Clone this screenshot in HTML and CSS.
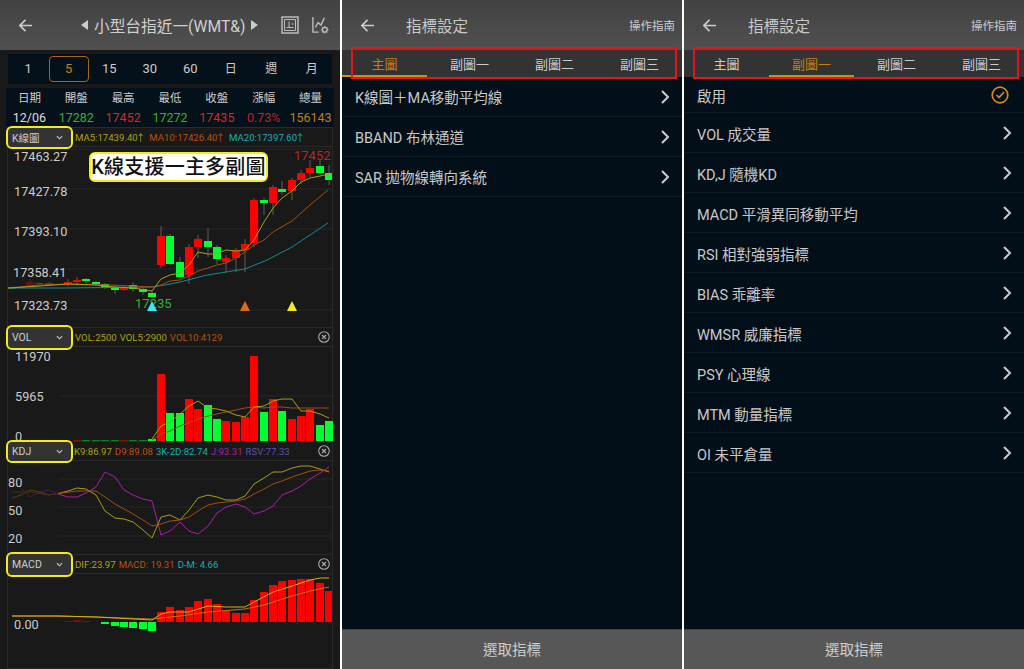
FILE: index.html
```html
<!DOCTYPE html>
<html lang="zh-Hant">
<head>
    <meta charset="UTF-8">
    <meta name="viewport" content="width=device-width, initial-scale=1.0">
    <title>指標設定</title>
    <link rel="stylesheet" href="styles.css">
</head>
<body>
    <div class="screens">
        <!-- Chart screen -->
        <section class="phone phone-chart">
            <header class="topbar">
                <svg class="back" viewBox="0 0 16 16"><path d="M15 8H2M8 2 2 8l6 6"/></svg>
                <div class="symbol"><span class="tri tri-left"></span><span>小型台指近一(WMT&amp;)</span><span class="tri tri-right"></span></div>
                <svg class="tool-icon tool-frame" viewBox="0 0 18 18"><rect x="1" y="1" width="16" height="16"/><path class="thin" d="M3.500 3.500h11v11h-11zM8 5.500v6M5.500 11.500h7M10.500 8h2"/></svg>
                <svg class="tool-icon tool-gear" viewBox="0 0 20 20"><path d="M2 1v16h6M4.500 12 7.500 7l3 2.500L14 2"/><circle cx="14.500" cy="14.500" r="2.500"/><path class="thin" d="M14.500 10.500v1.500M14.500 17v1.500M10.500 14.500h1.500M17 14.500h1.500M11.700 11.700l1 1M16.300 16.300l1 1M17.300 11.700l-1 1M12.700 16.300l-1 1"/></svg>
            </header>

            <div class="periods">
                <div>1</div>
                <div class="active">5</div>
                <div>15</div>
                <div>30</div>
                <div>60</div>
                <div class="cjk">日</div>
                <div class="cjk">週</div>
                <div class="cjk">月</div>
            </div>

            <div class="quote">
                <div class="head">日期</div><div class="head">開盤</div><div class="head">最高</div><div class="head">最低</div><div class="head">收盤</div><div class="head">漲幅</div><div class="head">總量</div>
                <div class="date">12/06</div>
                <div class="up">17282</div>
                <div class="down">17452</div>
                <div class="up">17272</div>
                <div class="down">17435</div>
                <div class="pct">0.73%</div>
                <div class="total">156143</div>
            </div>

            <div class="chart">
                <div class="callout">K線支援一主多副圖</div>

                <div class="legend legend-first">
                    <div class="picker"><span>K線圖</span><svg viewBox="0 0 8 5"><path d="M1 1l3 3 3-3"/></svg></div>
                    <span class="c-yellow">MA5:17439.40<span class="arrow">↑</span></span>
                    <span class="c-orange">MA10:17426.40<span class="arrow">↑</span></span>
                    <span class="c-cyan">MA20:17397.60<span class="arrow">↑</span></span>
                </div>
                <svg class="plot plot-main" viewBox="8 147 324 180">
                    <path class="grid" d="M58 149H332M58 189H332M58 229H332M58 269H332M58 310H332"/>
                    <g class="faded">
                        <path class="wick" d="M12 286V290M30 279V288M39 282V287M49 281V286"/>
                        <path class="red" d="M26 282h8v4h-8zM17 287h8v1h-8z"/>
                        <path class="green" d="M8 287h8v2h-8zM35 283h8v1h-8zM45 283h8v1h-8z"/>
                    </g>
                    <path class="wick" d="M68 279V286M77 277V285M86 278V284M96 281V285M105 283V289M115 285V294M124 286V291M133 282V292M143 287V295M152 291V298M161 226V268M170 234V265M180 257V277M189 244V284M198 235V258M208 228V257M217 245V264M226 255V273M236 248V272M245 239V272M254 198V247M264 198V215M273 185V215M282 181V195M292 178V200M301 170V184M310 160V177M320 160V174M329 165V185"/>
                    <path class="red" d="M64 282h8v2h-8zM73 280h8v2h-8zM120 288h8v2h-8zM157 236h8v29h-8zM185 247h8v28h-8zM194 239h8v8h-8zM222 258h8v4h-8zM232 250h8v8h-8zM241 244h8v6h-8zM250 200h8v43h-8zM269 187h8v16h-8zM288 180h8v11h-8zM297 173h8v7h-8zM306 168h8v5h-8z"/>
                    <path class="green" d="M82 279h8v2h-8zM92 282h8v2h-8zM101 284h8v3h-8zM111 287h8v3h-8zM129 285h8v4h-8zM139 289h8v3h-8zM148 293h8v4h-8zM166 236h8v28h-8zM176 262h8v15h-8zM204 241h8v6h-8zM213 247h8v12h-8zM260 200h8v3h-8zM278 189h8v3h-8zM316 166h8v7h-8zM325 173h8v7h-8z"/>
                    <polyline class="line teal" points="8,288 65,288 152,287 165,285 180,282 207,275 245,269 267,260 292,247 328,223"/>
                    <polyline class="line brown" points="8,288 40,285 68,284 110,285 152,287 161,285 170,281 180,280 189,276 198,271 208,268 217,265 226,263 236,258 245,252 254,245 264,240 273,232 292,221 310,205 328,190"/>
                    <polyline class="line olive" points="8,288 40,286 68,284 96,285 115,287 133,288 152,291 161,279 170,275 180,273 189,265 198,252 208,254 217,254 226,250 236,251 245,250 254,240 264,222 273,208 282,198 292,191 301,182 310,178 320,176 329,174"/>
                    <text class="axis" x="14" y="161">17463.27</text>
                    <text class="axis" x="14" y="196">17427.78</text>
                    <text class="axis" x="14" y="236">17393.10</text>
                    <text class="axis" x="13" y="277">17358.41</text>
                    <text class="axis" x="14" y="310">17323.73</text>
                    <text class="mark-high" x="294" y="160">17452</text>
                    <text class="mark-low" x="135" y="308">17235</text>
                    <path class="tri-cyan" d="M152 301l5 10h-10z"/>
                    <path class="tri-orange" d="M245 301l5 10h-10z"/>
                    <path class="tri-yellow" d="M292 301l5 10h-10z"/>
                </svg>

                <div class="legend">
                    <div class="picker"><span>VOL</span><svg viewBox="0 0 8 5"><path d="M1 1l3 3 3-3"/></svg></div>
                    <span class="c-yellow">VOL:2500</span>
                    <span class="c-yellow">VOL5:2900</span>
                    <span class="c-orange">VOL10:4129</span>
                    <svg class="close" viewBox="0 0 12 12"><circle cx="6" cy="6" r="5.300"/><path d="M4 4l4 4M8 4l-4 4"/></svg>
                </div>
                <svg class="plot plot-vol" viewBox="8 347 324 94">
                    <path class="grid" d="M58 396H332"/>
                    <path class="red" d="M157 374h8v67h-8zM185 399h8v42h-8zM194 409h8v32h-8zM222 421h8v20h-8zM232 422h8v19h-8zM241 417h8v24h-8zM250 356h8v85h-8zM269 399h8v42h-8zM288 419h8v22h-8zM297 416h8v25h-8zM306 409h8v32h-8z"/>
                    <path class="green" d="M148 439h8v2h-8zM166 413h8v28h-8zM176 413h8v28h-8zM204 405h8v36h-8zM213 419h8v22h-8zM260 412h8v29h-8zM278 411h8v30h-8zM316 425h8v16h-8zM325 421h8v20h-8z"/>
                    <g class="dim">
                        <path class="red" d="M73 440h8v1h-8zM120 440h8v1h-8z"/>
                        <path class="green" d="M82 440h8v1h-8zM92 440h8v1h-8zM101 440h8v1h-8zM111 440h8v1h-8zM129 440h8v1h-8zM139 440h8v1h-8z"/>
                    </g>
                    <polyline class="line brown" points="152,440 161,434 170,431 180,426 189,423 198,419 208,416 217,414 226,412 236,410 245,408 254,407 264,408 273,407 282,407 292,408 301,408 310,408 329,408"/>
                    <polyline class="line olive" points="152,439 161,426 170,422 180,414 189,406 198,401 208,408 217,409 226,411 236,415 245,417 254,407 264,406 273,401 282,399 292,399 301,411 310,411 320,414 329,418"/>
                    <text class="axis" x="15" y="361">11970</text>
                    <text class="axis" x="15" y="401">5965</text>
                    <text class="axis" x="15" y="441">0</text>
                </svg>

                <div class="legend">
                    <div class="picker picker-low"><span>KDJ</span><svg viewBox="0 0 8 5"><path d="M1 1l3 3 3-3"/></svg></div>
                    <span class="c-yellow">K9:86.97</span>
                    <span class="c-orange">D9:89.08</span>
                    <span class="c-cyan">3K-2D:82.74</span>
                    <span class="c-purple">J:93.31</span>
                    <span class="c-violet">RSV:77.33</span>
                    <svg class="close" viewBox="0 0 12 12"><circle cx="6" cy="6" r="5.300"/><path d="M4 4l4 4M8 4l-4 4"/></svg>
                </div>
                <svg class="plot plot-kdj" viewBox="8 461 324 93">
                    <path class="grid" d="M58 479H332M58 507H332M58 536H332"/>
                    <g class="faded">
                        <polyline class="line olive" points="12,498 21,495 30,490 40,492 49,495 58,493.500"/>
                        <polyline class="line brown" points="12,492 30,492 49,495 58,493.500"/>
                        <polyline class="line magenta" points="21,488 30,497 40,492 49,490 58,494"/>
                    </g>
                    <polyline class="line magenta" points="58,494 68,497 77,497 86,493 96,487 105,472 115,477 124,490 133,495 143,499 152,501 161,535 170,531 180,522 189,531 198,534 208,526 217,513 226,507 236,504 245,507 254,514 264,511 273,506 282,495 292,491 301,486 310,479 320,473 329,467"/>
                    <polyline class="line olive" points="58,493.500 68,491 77,488 86,489 96,495 105,511 115,518 124,519 133,522 143,530 152,538 161,517 170,515 180,520 189,510 198,498 208,495 217,497 226,500 236,500 245,496 254,484 264,478 273,472 282,472 292,468 301,466 310,466 320,469 329,472"/>
                    <polyline class="line brown" points="58,493.500 77,491 96,491 105,497 115,504 124,509 133,514 143,520 152,526 161,524 170,521 180,520 189,517 198,511 208,505 217,503 226,502 236,501 245,499 254,494 264,489 273,484 282,481 292,477 301,474 310,471 320,470 329,471"/>
                    <text class="axis" x="8" y="487">80</text>
                    <text class="axis" x="8" y="515">50</text>
                    <text class="axis" x="8" y="543">20</text>
                </svg>

                <div class="legend">
                    <div class="picker"><span>MACD</span><svg viewBox="0 0 8 5"><path d="M1 1l3 3 3-3"/></svg></div>
                    <span class="c-yellow">DIF:23.97</span>
                    <span class="c-orange">MACD: 19.31</span>
                    <span class="c-cyan">D-M: 4.66</span>
                    <svg class="close" viewBox="0 0 12 12"><circle cx="6" cy="6" r="5.300"/><path d="M4 4l4 4M8 4l-4 4"/></svg>
                </div>
                <svg class="plot plot-macd" viewBox="8 574 324 94">
                    <path class="red" d="M157 612h8v10h-8zM166 607h8v15h-8zM176 610h8v12h-8zM185 607h8v15h-8zM194 601h8v21h-8zM204 599h8v23h-8zM213 604h8v18h-8zM222 610h8v12h-8zM232 613h8v9h-8zM241 613h8v9h-8zM250 600h8v22h-8zM260 592h8v30h-8zM269 585h8v37h-8zM278 581h8v41h-8zM288 580h8v42h-8zM297 579h8v43h-8zM306 579h8v43h-8zM316 583h8v39h-8zM325 591h8v31h-8z"/>
                    <path class="green" d="M101 622h8v2h-8zM111 622h8v4h-8zM120 622h8v5h-8zM129 622h8v6h-8zM139 622h8v7h-8zM148 622h8v9h-8z"/>
                    <path class="red dim" d="M64 621h8v1h-8zM73 620h8v2h-8zM82 621h8v1h-8z"/>
                    <polyline class="line amber" points="12,616 58,616 96,617 152,619 161,618 180,616 208,612 245,609 264,605 292,596 310,591 329,587"/>
                    <polyline class="line gold" points="12,616 58,616 96,617 152,620 161,614 170,612 189,612 208,606 226,607 245,607 254,602 273,592 292,586 310,580 320,578 329,578"/>
                    <text class="axis" x="14" y="629">0.00</text>
                </svg>
            </div>
        </section>

        <!-- Main chart indicators -->
        <section class="phone">
            <header class="topbar">
                <svg class="back" viewBox="0 0 16 16"><path d="M15 8H2M8 2 2 8l6 6"/></svg>
                <h1>指標設定</h1>
                <span class="guide">操作指南</span>
            </header>
            <nav class="tabs">
                <div class="tab active">主圖</div>
                <div class="tab">副圖一</div>
                <div class="tab">副圖二</div>
                <div class="tab">副圖三</div>
                <div class="red-box"></div>
            </nav>
            <ul class="rows">
                <li>K線圖＋MA移動平均線<svg class="chevron" viewBox="0 0 10 14"><path d="M2 1l6 6-6 6"/></svg></li>
                <li>BBAND 布林通道<svg class="chevron" viewBox="0 0 10 14"><path d="M2 1l6 6-6 6"/></svg></li>
                <li>SAR 拋物線轉向系統<svg class="chevron" viewBox="0 0 10 14"><path d="M2 1l6 6-6 6"/></svg></li>
            </ul>
            <footer class="pick">選取指標</footer>
        </section>

        <!-- Sub chart 1 indicators -->
        <section class="phone">
            <header class="topbar">
                <svg class="back" viewBox="0 0 16 16"><path d="M15 8H2M8 2 2 8l6 6"/></svg>
                <h1>指標設定</h1>
                <span class="guide">操作指南</span>
            </header>
            <nav class="tabs">
                <div class="tab">主圖</div>
                <div class="tab active">副圖一</div>
                <div class="tab">副圖二</div>
                <div class="tab">副圖三</div>
                <div class="red-box"></div>
            </nav>
            <ul class="rows rows-sub">
                <li class="row-enable">啟用<svg class="check" viewBox="0 0 18 18"><circle cx="9" cy="9" r="7.800"/><path d="M5.500 9l2.500 2.500 5-5.500"/></svg></li>
                <li>VOL 成交量<svg class="chevron" viewBox="0 0 10 14"><path d="M2 1l6 6-6 6"/></svg></li>
                <li>KD,J 隨機KD<svg class="chevron" viewBox="0 0 10 14"><path d="M2 1l6 6-6 6"/></svg></li>
                <li>MACD 平滑異同移動平均<svg class="chevron" viewBox="0 0 10 14"><path d="M2 1l6 6-6 6"/></svg></li>
                <li>RSI 相對強弱指標<svg class="chevron" viewBox="0 0 10 14"><path d="M2 1l6 6-6 6"/></svg></li>
                <li>BIAS 乖離率<svg class="chevron" viewBox="0 0 10 14"><path d="M2 1l6 6-6 6"/></svg></li>
                <li>WMSR 威廉指標<svg class="chevron" viewBox="0 0 10 14"><path d="M2 1l6 6-6 6"/></svg></li>
                <li>PSY 心理線<svg class="chevron" viewBox="0 0 10 14"><path d="M2 1l6 6-6 6"/></svg></li>
                <li>MTM 動量指標<svg class="chevron" viewBox="0 0 10 14"><path d="M2 1l6 6-6 6"/></svg></li>
                <li>OI 未平倉量<svg class="chevron" viewBox="0 0 10 14"><path d="M2 1l6 6-6 6"/></svg></li>
            </ul>
            <footer class="pick">選取指標</footer>
        </section>
    </div>
</body>
</html>
```

FILE: styles.css
```css
* {
    margin: 0;
    padding: 0;
    box-sizing: border-box;
}

body {
    font-family: Roboto, "Noto Sans CJK TC", sans-serif;
    background: #fff;
    color: #ccc;
    overflow: hidden;
}

.screens {
    display: grid;
    grid-template-columns: repeat(3, 340px);
    gap: 2px;
    width: 1024px;
    height: 669px;
}

.phone {
    position: relative;
    display: flex;
    flex-direction: column;
    height: 669px;
    background: #030f18;
}

.phone-chart {
    background: #191919;
}

/* top bar */
.topbar {
    display: flex;
    align-items: center;
    height: 50px;
    flex-shrink: 0;
    background: linear-gradient(#424242, #505050);
    padding: 0 7px 0 18px;
}

.back {
    width: 15px;
    height: 15px;
    fill: none;
    stroke: #ccc;
    stroke-width: 1.800;
}

.topbar h1 {
    font-size: 15.500px;
    font-weight: 400;
    margin-left: 31px;
    color: #c8c8c8;
}

.guide {
    margin-left: auto;
    font-size: 11.500px;
    color: #ccc;
}

.symbol {
    display: flex;
    align-items: center;
    gap: 6px;
    margin-left: 48px;
    font-size: 15.700px;
    color: #d0d0d0;
    white-space: nowrap;
}

.tri {
    width: 0;
    height: 0;
    border-top: 5px solid transparent;
    border-bottom: 5px solid transparent;
}

.tri-left {
    border-right: 7px solid #ccc;
}

.tri-right {
    border-left: 7px solid #ccc;
}

.tool-icon {
    fill: none;
    stroke: #bbb;
    stroke-width: 1.500;
}

.tool-icon .thin {
    stroke-width: 1;
}

.tool-frame {
    width: 18px;
    height: 18px;
    margin-left: 23px;
}

.tool-gear {
    width: 19px;
    height: 19px;
    margin-left: 12px;
}

/* period selector */
.periods {
    display: grid;
    grid-template-columns: repeat(8, 1fr);
    height: 30px;
    margin: 4px 8px 0;
    padding: 2px 0;
    background: #04101a;
    font-size: 13px;
    text-align: center;
}

.periods div {
    line-height: 26px;
    border-radius: 4px;
}

.periods .cjk {
    font-size: 12px;
}

.periods .active {
    color: #c67f12;
    border: 1px solid #a8650f;
    line-height: 24px;
}

/* quote table */
.quote {
    display: grid;
    grid-template-columns: repeat(7, 1fr);
    align-content: center;
    row-gap: 4px;
    height: 39px;
    margin: 4px 6px 0;
    padding-top: 1px;
    background: #04101a;
    font-size: 12.500px;
    line-height: 16px;
    text-align: center;
    white-space: nowrap;
}

.head { font-size: 11.500px; }
.date { color: #ddd; }
.up { color: #2fb52f; }
.down { color: #cf2b2b; }
.pct { color: #b92424; }
.total { color: #c47c10; }

/* chart stack */
.chart {
    position: relative;
    flex: 1;
    margin: 0 7px;
    border-left: 1px solid #2a2a2a;
    border-right: 1px solid #2a2a2a;
    border-bottom: 1px solid #2a2a2a;
}

.callout {
    position: absolute;
    z-index: 3;
    left: 81px;
    top: 25px;
    width: 179px;
    height: 30px;
    border: 2px solid #f4ec14;
    border-radius: 6px;
    background: #fff;
    color: #111;
    font-size: 20px;
    font-weight: 500;
    letter-spacing: 0.200px;
    line-height: 26px;
    text-align: center;
    white-space: nowrap;
}

.legend {
    position: relative;
    z-index: 2;
    display: flex;
    align-items: center;
    gap: 3px;
    height: 20px;
    border-top: 1px solid #2a2a2a;
    border-bottom: 1px solid #2a2a2a;
    font-size: 9.600px;
    white-space: nowrap;
}

.legend-first {
    gap: 5px;
}

.arrow {
    margin: 0 -1px 0 -2px;
}

.picker {
    display: flex;
    align-items: center;
    justify-content: space-between;
    flex-shrink: 0;
    width: 67px;
    height: 25px;
    margin: 0 -1px 0 -2px;
    padding: 0 8px 0 4px;
    background: #333;
    border: 2px solid #f4ec14;
    border-radius: 6px;
    color: #ccc;
    font-size: 10.500px;
}

.legend-first .picker {
    height: 23px;
    margin-right: -3px;
}

.picker-low {
    height: 23px;
    margin-right: -2px;
}

.picker svg {
    width: 7px;
    height: 5px;
    fill: none;
    stroke: #ccc;
    stroke-width: 1.200;
}

.close {
    width: 12px;
    height: 12px;
    margin-left: auto;
    margin-right: 2px;
    fill: none;
    stroke: #aaa;
    stroke-width: 1.100;
}

.c-yellow { color: #aaa30c; }
.c-orange { color: #b5530d; }
.c-cyan { color: #0fb0b5; }
.c-purple { color: #a81fa8; }
.c-violet { color: #5d4fb0; }

.plot {
    display: block;
    width: 324px;
}

.plot-main { height: 180px; }
.plot-vol { height: 94px; overflow: visible; }
.plot-kdj { height: 93px; }
.plot-macd { height: 94px; }

.grid {
    fill: none;
    stroke: #262626;
    stroke-width: 1;
}

.wick {
    fill: none;
    stroke: #5c5c5c;
    stroke-width: 1;
}

.red { fill: #f00; }
.green { fill: #0f3; }
.faded { opacity: 0.350; }
.dim { opacity: 0.450; }

.line {
    fill: none;
    stroke-width: 1;
}

.olive { stroke: #a5a010; }
.brown { stroke: #a34d10; }
.teal { stroke: #138b90; }
.magenta { stroke: #a81fa8; }
.gold { stroke: #d4b00c; }
.amber { stroke: #b9761a; }

.axis {
    fill: #ccc;
    font-size: 12.700px;
}

.mark-high {
    fill: #b02a2a;
    font-size: 13px;
}

.mark-low {
    fill: #2fb52f;
    font-size: 13px;
}

.tri-cyan { fill: #3fe6f0; }
.tri-orange { fill: #e06a10; }
.tri-yellow { fill: #f4ec14; }

/* indicator tabs */
.tabs {
    position: relative;
    display: grid;
    grid-template-columns: repeat(4, 1fr);
    grid-template-rows: 27px;
    height: 27px;
    flex-shrink: 0;
    background: #333;
}

.tab {
    font-size: 13px;
    line-height: 29px;
    text-align: center;
    color: #ccc;
    border-bottom: 2px solid transparent;
}

.tab.active {
    color: #c67f12;
    border-bottom-color: #d48a14;
}

.red-box {
    position: absolute;
    left: 9px;
    top: -3px;
    width: 326px;
    height: 32px;
    border: 2px solid #e8141c;
}

/* indicator rows */
.rows {
    flex: 1;
    list-style: none;
}

.rows li {
    display: flex;
    align-items: center;
    justify-content: space-between;
    height: 40px;
    padding: 0 12px 0 13px;
    border-bottom: 1px solid #0e1a24;
    font-size: 14.500px;
    color: #c8c8c8;
}

.rows .row-enable {
    height: 36px;
    padding-right: 15px;
}

.rows-sub li {
    padding-top: 2px;
}

.rows-sub .chevron,
.rows-sub .check {
    margin-top: -2px;
}

.chevron {
    width: 10px;
    height: 14px;
    fill: none;
    stroke: #ccc;
    stroke-width: 2;
}

.check {
    width: 18px;
    height: 18px;
    fill: none;
    stroke: #d48a14;
    stroke-width: 1.700;
}

.pick {
    height: 40px;
    flex-shrink: 0;
    background: #575757;
    border-top: 1px solid #444;
    font-size: 14.500px;
    line-height: 41px;
    text-align: center;
    color: #ccc;
}
```
